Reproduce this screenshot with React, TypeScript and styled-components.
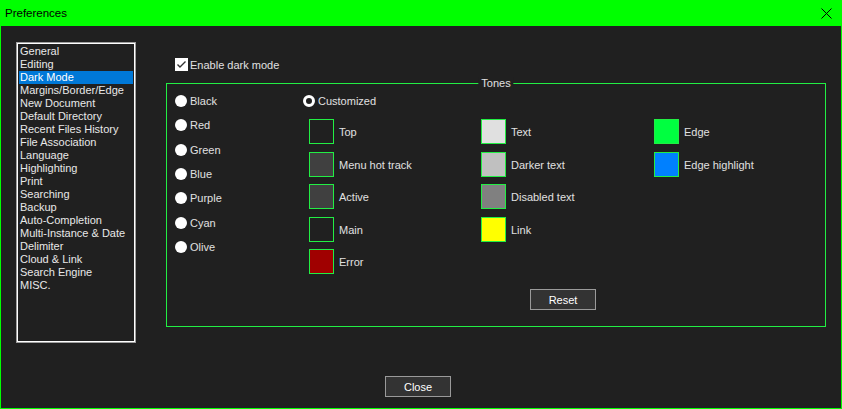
import React from 'react'
import styled, { createGlobalStyle } from 'styled-components'

const GREEN = '#00ff00'
const EDGE = '#22ee44'
const BG = '#202020'

const GlobalStyle = createGlobalStyle`
  html, body {
    margin: 0;
    padding: 0;
    background: ${BG};
  }
  body {
    font-family: "Liberation Sans", Arial, sans-serif;
    font-size: 11px;
    color: #e0e0e0;
  }
`

const Window = styled.div`
  width: 842px;
  height: 409px;
  box-sizing: border-box;
  border: 1px solid ${GREEN};
  border-top: none;
  background: ${BG};
  display: flex;
  flex-direction: column;
  overflow: hidden;
`

const TitleBar = styled.div`
  height: 26px;
  margin: 0 -1px;
  padding: 0 10px 0 5px;
  background: ${GREEN};
  color: #000;
  display: flex;
  align-items: center;
  justify-content: space-between;
  font-size: 11.5px;
`

const Body = styled.div`
  padding: 16px 0 0 15px;
  display: flex;
  flex-direction: column;
`

const TopRow = styled.div`
  display: flex;
  align-items: flex-start;
`

const ListBox = styled.div`
  width: 120px;
  height: 301px;
  box-sizing: border-box;
  border: 1px solid #a0a0a0;
  box-shadow: inset 0 0 0 1px #ffffff;
  padding: 2px 2px 0 2px;
  display: flex;
  flex-direction: column;
`

const ListItem = styled.div<{ $selected?: boolean }>`
  height: 13px;
  line-height: 13px;
  padding-left: 1px;
  white-space: nowrap;
  color: ${(p) => (p.$selected ? '#ffffff' : '#e8e8e8')};
  background: ${(p) => (p.$selected ? '#0078d7' : 'transparent')};
`

const Main = styled.div`
  margin-left: 30px;
  width: 660px;
  display: flex;
  flex-direction: column;
`

const CheckRow = styled.label`
  margin-top: 16px;
  padding-left: 9px;
  height: 13px;
  display: flex;
  align-items: center;
  gap: 2px;
`

const CheckBox = styled.span`
  width: 13px;
  height: 13px;
  background: #fff;
  display: flex;
  align-items: center;
  justify-content: center;
`

const Group = styled.div`
  position: relative;
  margin-top: 12px;
  height: 244px;
  box-sizing: border-box;
  border: 1px solid ${EDGE};
  padding: 10px 0 0 8px;
  display: flex;
`

const GroupLabel = styled.span`
  position: absolute;
  top: -7px;
  left: 50%;
  transform: translateX(-50%);
  padding: 0 3px;
  background: ${BG};
  line-height: 13px;
`

const RadioColumn = styled.div`
  width: 128px;
  display: grid;
  grid-template-rows: 24px 25px 24px 24px 25px 24px 13px;
`

const RadioItem = styled.div`
  height: 13px;
  display: flex;
  align-items: center;
  gap: 3px;
`

const RadioDot = styled.span<{ $checked?: boolean }>`
  width: 12px;
  height: 12px;
  border-radius: 50%;
  box-sizing: border-box;
  background: ${(p) => (p.$checked ? BG : '#ffffff')};
  border: ${(p) => (p.$checked ? '3px solid #ffffff' : 'none')};
`

const CustomColumn = styled.div`
  display: flex;
  flex-direction: column;
`

const SwatchArea = styled.div`
  margin: 12px 0 0 6px;
  display: flex;
`

const SwatchColumn = styled.div<{ $width: number }>`
  width: ${(p) => p.$width}px;
  display: grid;
  grid-template-rows: 33px 32px 33px 32px 25px;
`

const SwatchItem = styled.div`
  height: 25px;
  display: flex;
  align-items: center;
  gap: 5px;
  white-space: nowrap;
`

const Swatch = styled.span<{ $color: string }>`
  width: 25px;
  height: 25px;
  box-sizing: border-box;
  border: 1px solid ${EDGE};
  background: ${(p) => p.$color};
`

const ResetRow = styled.div`
  margin: 15px 0 0 227px;
`

const Button = styled.button`
  width: 66px;
  height: 21px;
  box-sizing: border-box;
  border: 1px solid #9a9a9a;
  background: #333333;
  color: #ffffff;
  font-family: "Liberation Sans", Arial, sans-serif;
  font-size: 11px;
  padding: 0;
`

const Footer = styled.div`
  margin: 33px 0 0 369px;
`

const categories = [
  'General',
  'Editing',
  'Dark Mode',
  'Margins/Border/Edge',
  'New Document',
  'Default Directory',
  'Recent Files History',
  'File Association',
  'Language',
  'Highlighting',
  'Print',
  'Searching',
  'Backup',
  'Auto-Completion',
  'Multi-Instance & Date',
  'Delimiter',
  'Cloud & Link',
  'Search Engine',
  'MISC.',
]

const tones = ['Black', 'Red', 'Green', 'Blue', 'Purple', 'Cyan', 'Olive']

const swatchColumns: { width: number; items: [string, string][] }[] = [
  {
    width: 172,
    items: [
      ['Top', '#202020'],
      ['Menu hot track', '#404040'],
      ['Active', '#404040'],
      ['Main', '#202020'],
      ['Error', '#a00000'],
    ],
  },
  {
    width: 173,
    items: [
      ['Text', '#e0e0e0'],
      ['Darker text', '#c0c0c0'],
      ['Disabled text', '#808080'],
      ['Link', '#ffff00'],
    ],
  },
  {
    width: 120,
    items: [
      ['Edge', '#00ff40'],
      ['Edge highlight', '#0080ff'],
    ],
  },
]

const CloseIcon = () => (
  <svg width="11" height="11" viewBox="0 0 11 11">
    <path d="M0.5 0.5 L10.5 10.5 M10.5 0.5 L0.5 10.5" stroke="#000" strokeWidth="1" />
  </svg>
)

const CheckMark = () => (
  <svg width="13" height="13" viewBox="0 0 13 13">
    <path d="M2.5 6.5 L5 9 L10.5 3.5" stroke="#333" strokeWidth="1.4" fill="none" />
  </svg>
)

export default function App() {
  return (
    <>
      <GlobalStyle />
      <Window>
        <TitleBar>
          <span>Preferences</span>
          <CloseIcon />
        </TitleBar>
        <Body>
          <TopRow>
            <ListBox>
              {categories.map((c) => (
                <ListItem key={c} $selected={c === 'Dark Mode'}>
                  {c}
                </ListItem>
              ))}
            </ListBox>
            <Main>
              <CheckRow>
                <CheckBox>
                  <CheckMark />
                </CheckBox>
                <span>Enable dark mode</span>
              </CheckRow>
              <Group>
                <GroupLabel>Tones</GroupLabel>
                <RadioColumn>
                  {tones.map((t) => (
                    <RadioItem key={t}>
                      <RadioDot />
                      <span>{t}</span>
                    </RadioItem>
                  ))}
                </RadioColumn>
                <CustomColumn>
                  <RadioItem>
                    <RadioDot $checked />
                    <span>Customized</span>
                  </RadioItem>
                  <SwatchArea>
                    {swatchColumns.map((col, i) => (
                      <SwatchColumn key={i} $width={col.width}>
                        {col.items.map(([label, color]) => (
                          <SwatchItem key={label}>
                            <Swatch $color={color} />
                            <span>{label}</span>
                          </SwatchItem>
                        ))}
                      </SwatchColumn>
                    ))}
                  </SwatchArea>
                  <ResetRow>
                    <Button>Reset</Button>
                  </ResetRow>
                </CustomColumn>
              </Group>
            </Main>
          </TopRow>
          <Footer>
            <Button>Close</Button>
          </Footer>
        </Body>
      </Window>
    </>
  )
}
